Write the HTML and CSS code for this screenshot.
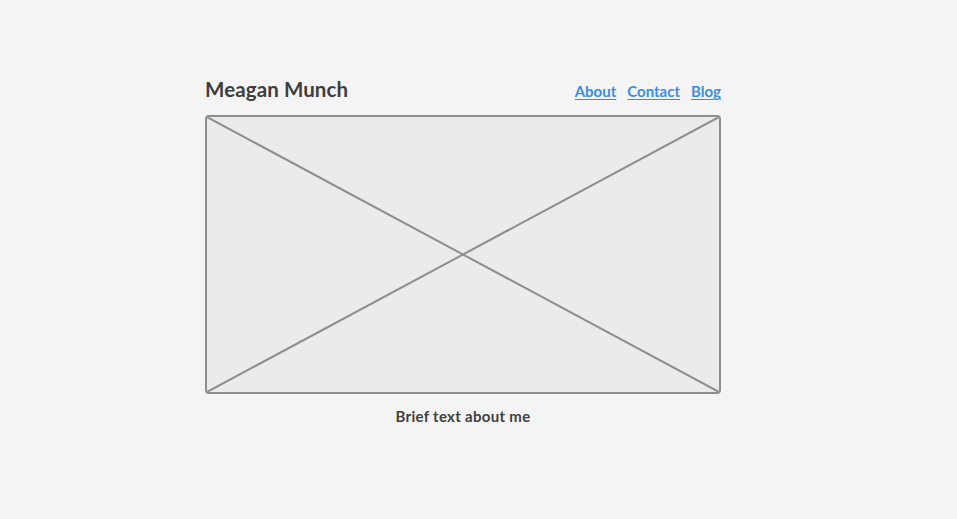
FILE: index.html
```html
<!DOCTYPE html>
<html lang="en">
<head>
<meta charset="utf-8">
<title>Meagan Munch</title>
<link rel="stylesheet" href="styles.css">
</head>
<body>
<div class="page">
  <header class="header">
    <h1 class="title">Meagan Munch</h1>
    <nav class="nav">
      <a href="#" class="nav-link">About</a>
      <a href="#" class="nav-link">Contact</a>
      <a href="#" class="nav-link">Blog</a>
    </nav>
  </header>
  <div class="placeholder">
    <svg class="cross" viewBox="0 0 100 100" preserveAspectRatio="none">
      <line x1="0" y1="0" x2="100" y2="100" vector-effect="non-scaling-stroke"/>
      <line x1="100" y1="0" x2="0" y2="100" vector-effect="non-scaling-stroke"/>
    </svg>
  </div>
  <p class="caption">Brief text about me</p>
</div>
</body>
</html>
```
FILE: styles.css
```css
html, body {
  margin: 0;
  padding: 0;
  background: #f4f4f4;
}
body {
  font-family: Lato, "Open Sans", "Liberation Sans", sans-serif;
  color: #3c3c3c;
}
.page {
  width: 516px;
  margin-left: 205px;
  padding-top: 75px;
}
.header {
  display: flex;
  justify-content: space-between;
  align-items: baseline;
  height: 40px;
}
.title {
  margin: 0;
  font-size: 20.5px;
  letter-spacing: 0.1px;
  font-weight: 700;
  color: #3e3e3e;
  line-height: 28px;
}
.nav {
  display: flex;
  gap: 11px;
}
.nav-link {
  font-size: 15px;
  font-weight: 700;
  color: #3b8fe0;
  text-decoration: underline;
  text-underline-offset: 2px;
}
.placeholder {
  box-sizing: border-box;
  height: 279px;
  border: 2px solid #8e8e8e;
  border-radius: 4px;
  background: #ebebeb;
  overflow: hidden;
}
.cross {
  display: block;
  width: 100%;
  height: 100%;
}
.cross line {
  stroke: #8e8e8e;
  stroke-width: 2;
}
.caption {
  margin: 13px 0 0;
  text-align: center;
  font-size: 15px;
  letter-spacing: 0.3px;
  font-weight: 700;
  color: #404040;
}
```
